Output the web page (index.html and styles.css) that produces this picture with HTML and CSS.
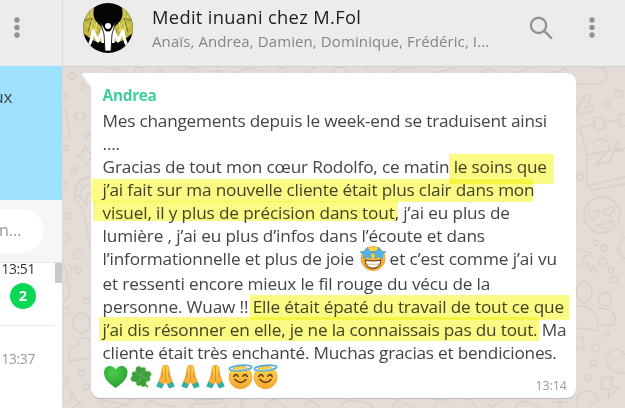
FILE: index.html
```html
<!DOCTYPE html>
<html lang="fr">
<head>
<meta charset="utf-8">
<title>Medit inuani chez M.Fol</title>
<link rel="stylesheet" href="styles.css">
</head>
<body>
<svg width="0" height="0" class="defs" aria-hidden="true">
  <defs>
    <linearGradient id="skin" x1="0" y1="0" x2="0" y2="1"><stop offset="0" stop-color="#ffd849"/><stop offset="1" stop-color="#f7a52c"/></linearGradient>
    <radialGradient id="green" cx=".4" cy=".3" r=".8"><stop offset="0" stop-color="#4bcb49"/><stop offset="1" stop-color="#249a32"/></radialGradient>
    <symbol id="pray" viewBox="0 0 25 25">
      <path d="M12.200 1.500C10.600.8 9.700 2 9.300 4L8 11.500L5.500 18.500L9.500 22L12.500 17.500L15.500 22L19.500 18.500L17 11.500L15.700 4C15.300 2 14.400.8 12.800 1.500Z" fill="url(#skin)" stroke="#dc8d22" stroke-width=".7"/>
      <path d="M12.500 2V17M9.500 8L8.800 14M15.500 8L16.200 14" fill="none" stroke="#cf8524" stroke-width=".8"/>
      <path d="M5.300 17.500L10.800 20.500L9 24.500L3.300 22.500ZM19.700 17.500L14.200 20.500L16 24.500L21.700 22.500Z" fill="#33afa3"/>
    </symbol>
    <symbol id="angel" viewBox="0 0 25 25">
      <circle cx="12.500" cy="13.300" r="11.400" fill="url(#skin)" stroke="#ef9a27" stroke-width=".8"/>
      <path d="M5.800 12.500Q8 8.800 10.200 12.300M14.800 12.300Q17 8.800 19.200 12.500M7 15.500Q12.500 21.500 18 15.500" fill="none" stroke="#59341c" stroke-width="1.500" stroke-linecap="round"/>
      <ellipse cx="12.500" cy="4" rx="11.300" ry="2.600" fill="none" stroke="#55afd6" stroke-width="1.700" transform="rotate(-5 12.500 4)"/>
      <path d="M2 5.500Q10 7.300 20 4.600" fill="none" stroke="#b0e0f1" stroke-width=".8"/>
    </symbol>
    <path id="leaf" d="M13 12.500C8 12 6 8 8 6C7 2 12 1 13.500 4C17 2 19 5 17 8Z"/>
  </defs>
</svg>
<div class="app">
  <aside class="side">
    <div class="side-head">
      <svg class="dots" viewBox="0 0 6 22"><circle cx="3" cy="3.500" r="2.700"/><circle cx="3" cy="11" r="2.700"/><circle cx="3" cy="18.500" r="2.700"/></svg>
    </div>
    <div class="notice">ux</div>
    <div class="search"><div class="field">n...</div></div>
    <div class="list">
      <div class="rows">
        <div class="row first"><time>13:51</time><b class="badge">2</b></div>
        <div class="row second"><time>13:37</time></div>
      </div>
      <div class="scroll"></div>
    </div>
  </aside>
  <main class="chat">
    <header class="top">
      <svg class="avatar" viewBox="0 0 50 50">
        <clipPath id="round"><circle cx="25" cy="25" r="25"/></clipPath>
        <g clip-path="url(#round)">
          <path d="M0 0H50V50H0Z" fill="#050505"/>
          <path d="M12 2C8 13 12 20 21 25L22 37C12 42 9 36 0 30V5ZM38 2C42 13 38 20 29 25L28 37C38 42 41 36 50 30V5Z" fill="#c0b946"/>
          <path d="M4 12L13 23M9 6L8 28M3 22L18 29M14 19L11 34M46 12L37 23M41 6L42 28M47 22L32 29M36 19L39 34" stroke="#e9e174" fill="none"/>
          <path d="M1 18L9 15L5 29M49 18L41 15L45 29M16 27L18 36M34 27L32 36" stroke="#79732a" fill="none"/>
          <path d="M6 42C9 38 9 33 10 28L15 38L19 28L20 40M44 42C41 38 41 33 40 28L35 38L31 28L30 40" fill="none" stroke="#fff" stroke-width="3" stroke-linejoin="round"/>
          <path d="M17 18L23 28H27L33 18L29 31L28 48H22L21 31Z" fill="#fff" stroke="#050505" stroke-width=".8"/>
          <circle cx="25" cy="23" r="3" fill="#fff"/>
        </g>
      </svg>
      <div class="who">
        <h1>Medit inuani chez M.Fol</h1>
        <p>Anaïs, Andrea, Damien, Dominique, Frédéric, I...</p>
      </div>
      <svg class="lens" viewBox="0 0 24 24"><circle cx="9.200" cy="9" r="7.300"/><path d="M14.500 14.300L22 21.800"/></svg>
      <svg class="dots" viewBox="0 0 6 22"><circle cx="3" cy="3.500" r="2.700"/><circle cx="3" cy="11" r="2.700"/><circle cx="3" cy="18.500" r="2.700"/></svg>
    </header>
    <section class="wall">
      <svg class="doodles" viewBox="63 66 562 342">
        <circle cx="72" cy="75" r="3.500"/><circle cx="65" cy="96" r="2.500"/><circle cx="80" cy="115" r="4.500"/><circle cx="87" cy="134" r="2.500"/><circle cx="66" cy="147" r="2.500"/><circle cx="74" cy="169" r="2.500"/><circle cx="64" cy="184" r="3.500"/><circle cx="69" cy="215" r="3"/><circle cx="65" cy="237" r="4.500"/><circle cx="78" cy="253" r="4.500"/><circle cx="78" cy="269" r="3"/><circle cx="86" cy="300" r="3"/><circle cx="66" cy="310" r="3.500"/><circle cx="81" cy="372" r="3"/><circle cx="65" cy="380" r="3.500"/><circle cx="86" cy="386" r="3"/>
        <path d="M65 108Q69 122 70 136L63 138M82 82Q86 88 90 86M83 80L81 89L87 91M76 154Q84 152 85 145Q88 153 95 154Q88 157 87 165Q84 157 76 154M91 176Q73 178 75 197Q84 207 86 222Q88 241 91 248M91 183Q80 184 80 196L87 205Q85 193 91 192M78 180L82 186M75 188L81 190M75 196L81 195M67 262Q75 268 68 280Q72 295 64 300M63 263Q71 274 64 284M81 312Q71 314 73 324Q77 333 84 332Q91 328 89 318Q87 312 81 312M70 360Q67 348 77 344Q80 334 88 337L90 340M70 360L91 357M64 402Q71 400 72 391Q74 400 82 402Q74 404 73 408"/>
        <path d="M105 68Q120 66 130 73M108 73L122 68M155 72Q160 63 164 73M183 70L193 66L201 73M210 70H224M217 66V73M235 72L248 67L262 70M302 73L318 65M330 72Q340 60 349 72M365 67L372 73M391 72Q405 64 416 68M430 73L455 67M480 72Q490 64 499 73M510 73Q525 70 530 66M547 73L565 68M135 72A4 4 0 1 1 142 72M278 70A4 4 0 1 1 286 72"/>
        <path d="M564 66L570 76Q574 84 581 83L596 83Q607 81 607 74Q605 66 598 66M577 110Q584 92 589 94Q592 99 585 107Q594 102 593 109Q590 112 577 113M577 127L580 132M580 127L594 123V117L603 116L605 127L596 129L594 123M605 121L619 119V114L625 113M619 119L621 126L625 125M580 127L587 152V185L625 176M587 154L625 147M587 185L593 189L625 183M593 145Q594 137 602 138Q611 139 609 148L596 164L610 161L616 143L620 141M620 142L614 151L624 149"/>
        <circle cx="619" cy="93" r="3.500"/><circle cx="607" cy="103" r="3"/><circle cx="580" cy="176" r="3"/><circle cx="602" cy="214" r="18"/><circle cx="596" cy="242" r="2.500"/><circle cx="604" cy="247" r="3"/><circle cx="603" cy="261" r="4"/><circle cx="593" cy="269" r="2.500"/><circle cx="611" cy="269" r="2.500"/><circle cx="614" cy="279" r="3"/><circle cx="607" cy="333" r="2.500"/><circle cx="596" cy="347" r="4"/><circle cx="593" cy="362" r="3"/><circle cx="588" cy="377" r="3"/>
        <path d="M594 219Q585 213 589 209L593 211Q599 207 599 212ZM609 215Q600 211 604 207L608 208Q613 204 614 209ZM596 224Q606 224 612 219Q614 228 605 227Q598 228 596 224ZM577 248L591 252Q592 256 586 254L582 260L589 262Q589 266 582 263L579 265M625 236Q615 244 619 252L625 258"/>
        <ellipse cx="584" cy="291" rx="8" ry="10"/><ellipse cx="605" cy="298" rx="6" ry="7"/><path d="M577 305Q595 303 598 324Q600 331 594 329L577 327M597 307Q615 307 616 320Q616 326 602 324M577 337L584 336L583 343L585 348L577 346M619 348Q604 351 606 360Q609 372 625 372M619 348L625 354M602 376L612 376L611 384L619 387L608 398L609 389L601 388ZM578 405Q573 392 587 390Q598 391 597 400L590 404L588 408"/>
        <path d="M98 398Q105 411 117 406Q130 405 132 398M101 399L128 404M143 406Q151 396 157 403L176 406M190 407L198 399L222 398L227 407M195 403L221 402M242 407Q238 398 249 399M263 406L273 398L280 402L287 408M303 405L310 399L320 406M339 408Q345 397 356 400Q370 400 374 408M391 408L397 399L415 407M434 407L440 398L453 403M470 398L478 408M488 400Q487 412 502 399M515 407Q518 398 530 401L541 407M552 401H568M560 398V408"/>
      </svg>
      <article class="bubble">
        <svg class="tail" viewBox="0 0 10 16"><path d="M1.500 0H10V14.500L.7 3Q-.4 1 1.500 0Z"/></svg>
        <h2>Andrea</h2>
        <p class="l1">Mes changements depuis le week-end se traduisent ainsi</p>
        <p class="l2">....</p>
        <p class="l3">Gracias de tout mon cœur Rodolfo, ce matin le soins que</p>
        <p class="l4">j’ai fait sur ma nouvelle cliente était plus clair dans mon</p>
        <p class="l5">visuel, il y plus de précision dans tout, j’ai eu plus de</p>
        <p class="l6">lumière , j’ai eu plus d’infos dans l’écoute et dans</p>
        <p class="tall"><span class="l7">l’informationnelle et plus de joie</span>
          <svg class="star" viewBox="0 0 25 25"><circle cx="12.500" cy="13" r="11.500" fill="url(#skin)" stroke="#e9962b" stroke-width=".8"/><path d="M7 2L9 6L13 6.500L10 9.500L11 13L7 11.500L3 13.500L3.500 9.500L0 6.500L4.500 6ZM18 2L20.500 6L25 6.500L21.500 9.500L22 13.500L18 11.500L14 13L15 9.500L12 6.500L16 6Z" fill="#50b3e6" stroke="#3794cd" stroke-width=".5"/><path d="M5 14.500Q12.500 16 20 14.500Q20 22 12.500 22.500Q5 22 5 14.500Z" fill="#fffdf0" stroke="#75421d" stroke-width="1.100"/><path d="M5.500 18.500H19.500" stroke="#bda88a" stroke-width=".7"/></svg>
          <span class="l8">et c’est comme j’ai vu</span></p>
        <p class="l9">et ressenti encore mieux le fil rouge du vécu de la</p>
        <p class="l10">personne. Wuaw !! Elle était épaté du travail de tout ce que</p>
        <p class="l11">j’ai dis résonner en elle, je ne la connaissais pas du tout. Ma</p>
        <p class="l12">cliente était très enchanté. Muchas gracias et bendiciones.</p>
        <div class="last">
          <svg viewBox="0 0 25 25"><path d="M12.700 24C6 19.500 1 15 1 8.500C1 1 9.500-.3 12.700 5.500C16 -.3 24.500 1 24.500 8.500C24.500 15 19 19.500 12.700 24Z" fill="url(#green)"/></svg>
          <svg viewBox="0 0 25 25"><g fill="#3f9f3d" stroke="#86d070" stroke-width=".6"><use href="#leaf"/><use href="#leaf" transform="rotate(90 13 12.500)"/><use href="#leaf" transform="rotate(180 13 12.500)"/><use href="#leaf" transform="rotate(270 13 12.500)"/></g><path d="M13 12Q14 19 20 23" fill="none" stroke="#3f9f3d" stroke-width="1.600"/></svg>
          <svg><use href="#pray"/></svg><svg><use href="#pray"/></svg><svg><use href="#pray"/></svg>
          <svg><use href="#angel"/></svg><svg><use href="#angel"/></svg>
          <time>13:14</time>
        </div>
        <i class="mark m1"></i><i class="mark m2"></i><i class="mark m3"></i><i class="mark m4"></i><i class="mark m5"></i>
      </article>
    </section>
  </main>
</div>
</body>
</html>
```
FILE: styles.css
```css
* { box-sizing: border-box; }
body, h1, h2, p { margin: 0; font-weight: 400; }
body { font-family: "Open Sans", "Noto Sans", sans-serif; overflow: hidden; }
.defs { position: absolute; }
.app { display: flex; width: 625px; height: 408px; }
svg { display: block; flex: none; }

.side { display: flex; flex-direction: column; width: 62px; background: #fff; overflow: hidden; }
.side-head { height: 66px; background: #ececec; padding: 16px 0 0 14px; }
.dots { width: 6px; height: 23px; fill: #929292; }
.notice { display: flex; justify-content: flex-end; height: 134px; background: #9de1fe; padding: 19px 50px 0 0; font-size: 17px; line-height: 24px; color: #444; letter-spacing: -.3px; }
.search { height: 63px; background: #f6f6f6; border-bottom: 1px solid #e4e4e4; padding: 9px 18px 0 0; }
.field { height: 44px; background: #fff; border-radius: 0 22px 22px 0; font-size: 16px; line-height: 42px; color: #999; text-indent: -1px; }
.list { display: flex; flex: 1; }
.rows { width: 55px; }
.row { display: flex; flex-direction: column; }
.row time { font-size: 13.800px; line-height: 20px; letter-spacing: -.35px; padding-left: 1.500px; }
.first { height: 67px; margin-top: -4px; border-bottom: 1px solid #ececec; color: #333; }
.second { padding-top: 23px; color: #999; }
.badge { width: 26px; height: 26px; margin: 4px 0 0 10px; border-radius: 50%; background: #09d856; color: #fff; font-size: 14.500px; font-weight: 700; line-height: 25px; text-align: center; }
.scroll { width: 7px; height: 20px; background: #c9c9c9; }

.chat { display: flex; flex-direction: column; width: 563px; border-left: 1px solid #d8d8d8; }
.top { display: flex; height: 66px; background: #ececec; padding-left: 20px; }
.avatar { width: 50px; height: 50px; margin-top: 3px; }
.who { width: 376px; padding: 4px 0 0 19px; white-space: nowrap; }
.who h1 { font-size: 18.300px; line-height: 25px; letter-spacing: .34px; color: #1d1d1d; }
.who p { font-size: 15px; line-height: 25px; letter-spacing: .1px; color: #858585; }
.lens { width: 25px; height: 25px; margin: 16px 0 0 20px; fill: none; stroke: #929292; stroke-width: 2.300; }
.top .dots { margin: 16px 0 0 35px; }

.wall { position: relative; flex: 1; background: #e4dcd6; border-top: 1px solid #d4ccc6; padding: 6px 0 0 28px; }
.doodles { position: absolute; left: 0; top: 0; width: 562px; height: 342px; fill: none; stroke: #d8cfc9; stroke-width: 1.300; }
.bubble { position: relative; width: 485px; height: 325px; background: #fff; border-radius: 0 9px 9px 9px; box-shadow: 0 1px 1px rgba(0,0,0,.18); padding: 11px 0 0 11.600px; white-space: nowrap; }
.tail { position: absolute; left: -9px; top: 0; width: 10px; height: 16px; fill: #fff; }
.bubble h2 { font-size: 15.300px; line-height: 22px; margin-bottom: 3px; font-weight: 700; color: #3fcf9d; letter-spacing: -.25px; }
.bubble p { height: 23px; font-size: 17.200px; line-height: 23px; color: #444; }
.bubble p.tall { display: flex; height: 25px; }
.star { width: 26px; height: 26px; margin: -2px 0 0; }
.l1 { letter-spacing: -.215px; }
.l2 { letter-spacing: -.2px; }
.l3 { letter-spacing: -.170px; }
.l4 { letter-spacing: -.175px; }
.l5 { letter-spacing: -.135px; }
.l6 { letter-spacing: -.125px; }
.l7 { letter-spacing: -.155px; width: 257px; }
.l8 { letter-spacing: -.08px; margin-left: 4px; }
.l9 { letter-spacing: -.175px; }
.l10 { letter-spacing: -.145px; }
.l11 { letter-spacing: -.185px; }
.l12 { letter-spacing: -.205px; }
.last { display: flex; height: 27px; }
.last svg { width: 25px; height: 25px; }
.last time { margin: 13px 0 0 258px; font-size: 12.300px; line-height: 17px; color: #999; letter-spacing: -.05px; }
.mark { position: absolute; background: #fafa85; mix-blend-mode: multiply; }
.m1 { left: 358px; top: 81px; width: 105px; height: 30px; }
.m2 { left: 1px; top: 106px; width: 441px; height: 23px; }
.m3 { left: 2px; top: 128px; width: 305px; height: 20px; }
.m4 { left: 159px; top: 222px; width: 319px; height: 25px; }
.m5 { left: 8px; top: 244px; width: 440px; height: 24px; }
```
